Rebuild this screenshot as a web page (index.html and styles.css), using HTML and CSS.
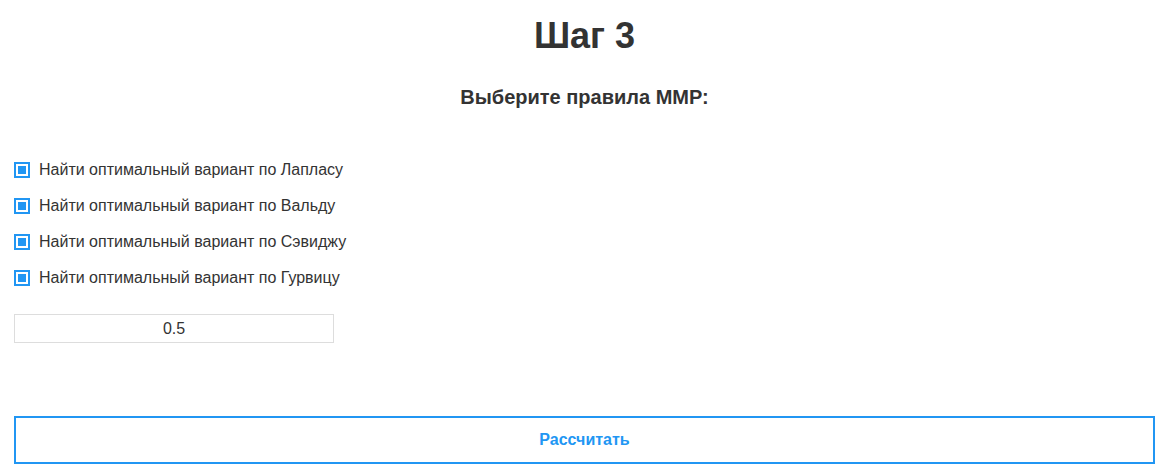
FILE: index.html
```html
<!DOCTYPE html>
<html lang="ru">
<head>
<meta charset="utf-8">
<title>Шаг 3</title>
<link rel="stylesheet" href="styles.css">
</head>
<body>
<div class="page">
  <h1 class="title">Шаг 3</h1>
  <h3 class="subtitle">Выберите правила ММР:</h3>
  <div class="rules">
    <label class="rule"><input type="checkbox" class="check" checked><span>Найти оптимальный вариант по Лапласу</span></label>
    <label class="rule"><input type="checkbox" class="check" checked><span>Найти оптимальный вариант по Вальду</span></label>
    <label class="rule"><input type="checkbox" class="check" checked><span>Найти оптимальный вариант по Сэвиджу</span></label>
    <label class="rule"><input type="checkbox" class="check" checked><span>Найти оптимальный вариант по Гурвицу</span></label>
  </div>
  <input type="text" class="coef" value="0.5">
  <button class="calc" type="button">Рассчитать</button>
</div>
</body>
</html>
```

FILE: styles.css
```css
* { box-sizing: border-box; }
body {
  margin: 0;
  background: #fff;
  color: #333;
  font-family: "Liberation Sans", Arial, sans-serif;
}
.page {
  display: flex;
  flex-direction: column;
  padding: 0 16px 0 14px;
}
.title {
  margin: 16px 0 0;
  font-size: 36px;
  line-height: 40px;
  font-weight: bold;
  text-align: center;
}
.subtitle {
  margin: 30px 0 0;
  font-size: 20px;
  line-height: 22px;
  font-weight: bold;
  text-align: center;
}
.rules {
  display: flex;
  flex-direction: column;
  margin-top: 44px;
}
.rule {
  display: flex;
  align-items: center;
  height: 36px;
  gap: 9px;
  font-size: 16px;
  line-height: 20px;
}
.check {
  appearance: none;
  -webkit-appearance: none;
  margin: 0;
  width: 16px;
  height: 16px;
  border: 2px solid #2196f3;
  background: #2196f3;
  box-shadow: inset 0 0 0 2px #fff;
  flex: none;
}
.coef {
  margin-top: 18px;
  width: 320px;
  height: 29px;
  border: 1px solid #ddd;
  text-align: center;
  font-family: inherit;
  font-size: 16px;
  color: #333;
  padding: 0;
  outline: none;
}
.calc {
  margin-top: 73px;
  height: 48px;
  width: 100%;
  border: 2px solid #2196f3;
  background: #fff;
  color: #2196f3;
  font-family: inherit;
  font-size: 16px;
  font-weight: bold;
  padding: 0;
}
```
